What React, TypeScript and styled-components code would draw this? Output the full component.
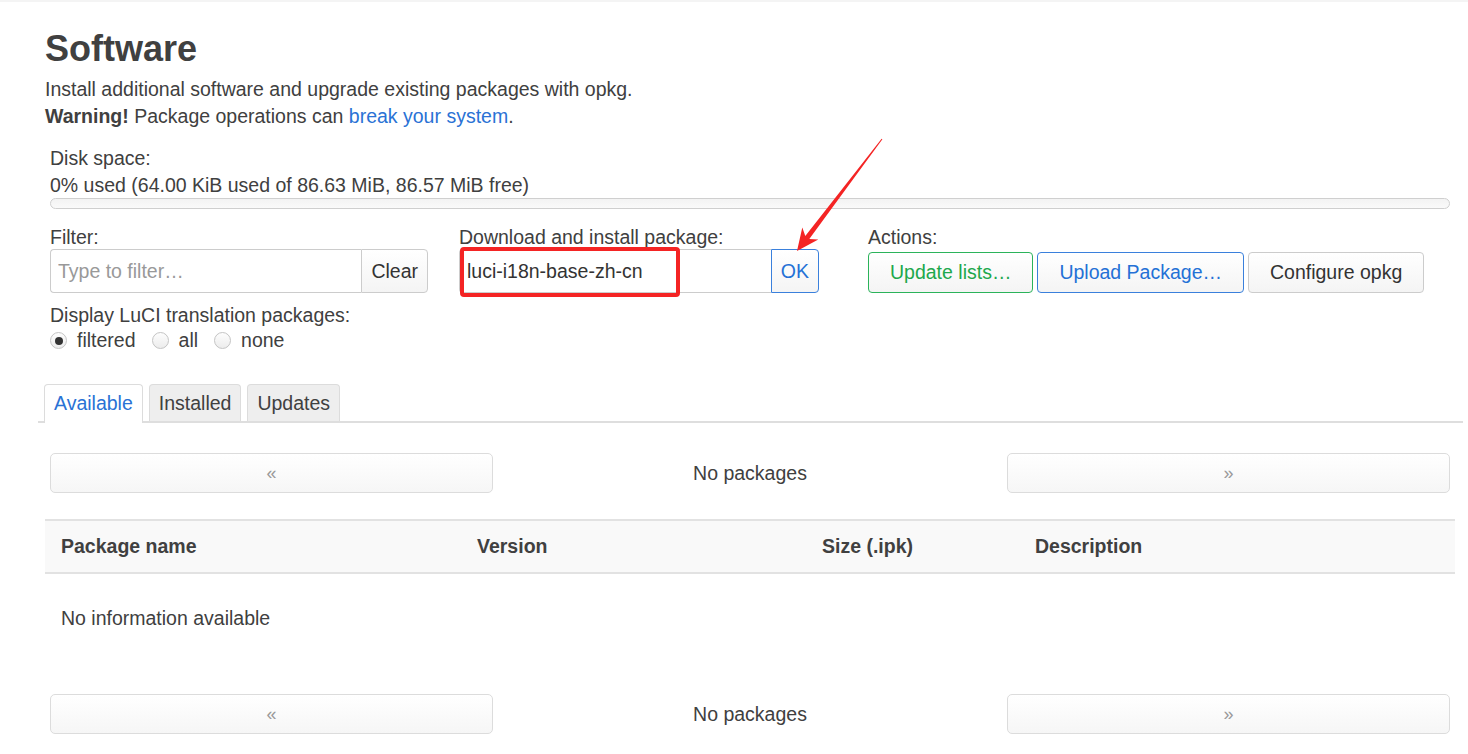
import React from "react";
import styled, { createGlobalStyle } from "styled-components";

const GlobalStyle = createGlobalStyle`
  html, body { margin: 0; padding: 0; background: #fff; }
  body {
    font-family: "Liberation Sans", Arial, Helvetica, sans-serif;
    font-size: 19.5px;
    line-height: 27px;
    color: #404040;
  }
  * { box-sizing: border-box; }
`;

const Page = styled.div`
  position: relative;
  border-top: 2px solid #f4f4f4;
  padding: 0 13px 40px 45px;
`;

const Title = styled.h2`
  margin: 27px 0 7px;
  font-size: 36px;
  line-height: 40px;
  font-weight: bold;
  color: #404040;
`;

const Desc = styled.p`
  margin: 0;
`;

const Link = styled.a`
  color: #2a72d5;
  text-decoration: none;
`;

const Section = styled.div`
  margin-top: 15px;
  padding: 0 5px;
`;

const Line = styled.div``;

const Progress = styled.div`
  margin-top: -1px;
  height: 11px;
  border: 1px solid #cfcfcf;
  border-radius: 6px;
  background: linear-gradient(#f3f3f3, #fafafa);
`;

const Controls = styled.div`
  display: flex;
  align-items: flex-start;
  margin-top: 15px;
`;

const Column = styled.div<{ $w?: number; $mr?: number }>`
  position: relative;
  ${(p) => (p.$w ? `width: ${p.$w}px; flex: 0 0 ${p.$w}px;` : "flex: 1;")}
  margin-right: ${(p) => p.$mr ?? 0}px;
`;

const Label = styled.div`
  line-height: 27px;
  margin-bottom: -2px;
`;

const Group = styled.div`
  position: relative;
  display: flex;
  height: 44px;
`;

const TextInput = styled.input`
  flex: 1;
  min-width: 0;
  height: 44px;
  margin: 0;
  padding: 0 7px;
  font: inherit;
  color: #333;
  border: 1px solid #ccc;
  border-right: none;
  border-radius: 4px 0 0 4px;
  background: #fff;
  outline: none;
  &::placeholder { color: #999; }
`;

const Button = styled.button<{ $tone?: "green" | "blue" | "plain"; $joined?: boolean }>`
  height: ${(p) => (p.$joined ? 44 : 41)}px;
  margin: 0;
  padding: 0 ${(p) => (p.$joined ? 9 : 21)}px;
  font: inherit;
  line-height: 27px;
  white-space: nowrap;
  cursor: pointer;
  border-radius: ${(p) => (p.$joined ? "0 4px 4px 0" : "4px")};
  background: linear-gradient(#ffffff, #f4f4f4);
  color: ${(p) => (p.$tone === "green" ? "#20a84c" : p.$tone === "blue" ? "#2471d6" : "#333")};
  border: 1px solid
    ${(p) => (p.$tone === "green" ? "#2bb35a" : p.$tone === "blue" ? "#3a80dc" : "#ccc")};
`;

const ActionRow = styled.div`
  display: flex;
  gap: 4px;
  margin-top: 3px;
`;

const Highlight = styled.div`
  position: absolute;
  left: 1px;
  top: -2px;
  width: 220px;
  height: 50px;
  border: 4px solid #f42424;
  border-radius: 4px;
  pointer-events: none;
`;

const Arrow = styled.svg`
  position: absolute;
  left: 790px;
  top: 130px;
  overflow: visible;
  pointer-events: none;
`;

const SubLabel = styled.div`
  margin-top: 9px;
`;

const RadioRow = styled.div`
  display: flex;
  align-items: center;
  gap: 16px;
  margin-top: -2px;
`;

const RadioItem = styled.label`
  display: flex;
  align-items: center;
  gap: 10px;
`;

const RadioDot = styled.span<{ $on?: boolean }>`
  position: relative;
  width: 17px;
  height: 17px;
  border-radius: 50%;
  border: 1px solid #c4c4c4;
  background: linear-gradient(#fdfdfd, #ececec);
  &::after {
    content: "";
    display: ${(p) => (p.$on ? "block" : "none")};
    position: absolute;
    left: 3.5px;
    top: 3.5px;
    width: 8px;
    height: 8px;
    border-radius: 50%;
    background: #333;
  }
`;

const TabBar = styled.div`
  display: flex;
  gap: 6px;
  margin: 30px -8px 0 -7px;
  padding-left: 6px;
  border-bottom: 2px solid #dedede;
`;

const Tab = styled.div<{ $active?: boolean }>`
  padding: 5px 9px 4px;
  line-height: 27px;
  border: 1px solid #dcdcdc;
  border-bottom: none;
  border-radius: 4px 4px 0 0;
  background: ${(p) => (p.$active ? "#fff" : "#eeeeee")};
  color: ${(p) => (p.$active ? "#2a72d5" : "#404040")};
  margin-bottom: ${(p) => (p.$active ? "-2px" : "0")};
  padding-bottom: ${(p) => (p.$active ? "6px" : "4px")};
`;

const Pager = styled.div<{ $mt: number }>`
  display: flex;
  align-items: center;
  margin-top: ${(p) => p.$mt}px;
  padding: 0 5px;
`;

const PageButton = styled.div`
  flex: 0 0 443px;
  height: 40px;
  display: flex;
  align-items: center;
  justify-content: center;
  border: 1px solid #dcdcdc;
  border-radius: 5px;
  background: linear-gradient(#ffffff, #f6f6f6);
  color: #999;
  font-size: 18px;
`;

const PagerText = styled.div`
  flex: 1;
  text-align: center;
`;

const Table = styled.div`
  margin-top: 26px;
`;

const HeadRow = styled.div`
  display: grid;
  grid-template-columns: 416px 345px 213px 1fr;
  background: #f9f9f9;
  border-top: 2px solid #e2e2e2;
  border-bottom: 2px solid #e2e2e2;
`;

const HeadCell = styled.div`
  padding: 12px 16px;
  font-weight: bold;
  line-height: 27px;
`;

const EmptyRow = styled.div`
  padding: 31px 16px 32px;
`;

export default function App() {
  return (
    <>
      <GlobalStyle />
      <Page>
        <Title>Software</Title>
        <Desc>
          Install additional software and upgrade existing packages with opkg.
          <br />
          <strong>Warning!</strong> Package operations can <Link href="#">break your system</Link>.
        </Desc>

        <Section>
          <Line>Disk space:</Line>
          <Line>0% used (64.00 KiB used of 86.63 MiB, 86.57 MiB free)</Line>
          <Progress />

          <Controls>
            <Column $w={378} $mr={31}>
              <Label>Filter:</Label>
              <Group>
                <TextInput placeholder="Type to filter…" />
                <Button $joined>Clear</Button>
              </Group>
            </Column>
            <Column $w={360} $mr={49}>
              <Label>Download and install package:</Label>
              <Group>
                <TextInput defaultValue="luci-i18n-base-zh-cn" />
                <Button $joined $tone="blue">OK</Button>
                <Highlight />
              </Group>
            </Column>
            <Column>
              <Label>Actions:</Label>
              <ActionRow>
                <Button $tone="green">Update lists…</Button>
                <Button $tone="blue">Upload Package…</Button>
                <Button>Configure opkg</Button>
              </ActionRow>
            </Column>
          </Controls>

          <SubLabel>Display LuCI translation packages:</SubLabel>
          <RadioRow>
            <RadioItem><RadioDot $on />filtered</RadioItem>
            <RadioItem><RadioDot />all</RadioItem>
            <RadioItem><RadioDot />none</RadioItem>
          </RadioRow>
        </Section>

        <TabBar>
          <Tab $active>Available</Tab>
          <Tab>Installed</Tab>
          <Tab>Updates</Tab>
        </TabBar>

        <Pager $mt={30}>
          <PageButton>«</PageButton>
          <PagerText>No packages</PagerText>
          <PageButton>»</PageButton>
        </Pager>

        <Table>
          <HeadRow>
            <HeadCell>Package name</HeadCell>
            <HeadCell>Version</HeadCell>
            <HeadCell>Size (.ipk)</HeadCell>
            <HeadCell>Description</HeadCell>
          </HeadRow>
          <EmptyRow>No information available</EmptyRow>
        </Table>

        <Pager $mt={30}>
          <PageButton>«</PageButton>
          <PagerText>No packages</PagerText>
          <PageButton>»</PageButton>
        </Pager>

        <Arrow width="100" height="125" viewBox="790 130 100 125">
          <polygon
            points="882.4,137.3 809.3,237 818.3,237.5 797,249 802.3,225.4 805.3,234 881.6,136.7"
            fill="#f42424"
          />
        </Arrow>
      </Page>
    </>
  );
}
